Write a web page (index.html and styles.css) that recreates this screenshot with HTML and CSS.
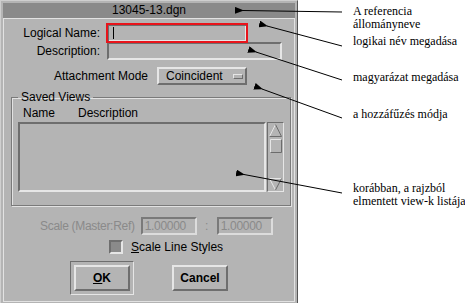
FILE: index.html
```html
<!DOCTYPE html>
<html lang="hu">
<head>
    <meta charset="UTF-8" />
    <title>Reference file attach</title>
    <link rel="stylesheet" href="styles.css">
</head>
<body>
    <div class="page">
        <div class="dialog">
            <div class="titlebar">13045-13.dgn</div>
            <div class="panel">
                <div class="row row-name">
                    <span class="lbl">Logical Name:</span>
                    <div class="field focus"><span class="caret"></span></div>
                </div>
                <div class="row row-desc">
                    <span class="lbl">Description:</span>
                    <div class="field sunken desc"></div>
                </div>
                <div class="row row-mode">
                    <span class="lbl lbl-mode">Attachment Mode</span>
                    <div class="option">Coincident<span class="ind"></span></div>
                </div>

                <fieldset class="group">
                    <legend>Saved Views</legend>
                    <div class="heads"><span class="h-name">Name</span><span>Description</span></div>
                    <div class="listwrap">
                        <div class="list"></div>
                        <div class="scroll">
                            <svg width="15" height="68" viewBox="0 0 15 68">
                                <!-- up arrow -->
                                <polyline points="1.5,13.5 7.5,1.5" fill="none" stroke="#e6e6e6" />
                                <polyline points="7.5,1.5 13.5,13.5 1.5,13.5" fill="none" stroke="#6c6c6c" />
                                <!-- slider -->
                                <polyline points="2.5,29.5 2.5,16.5 13.5,16.5" fill="none" stroke="#e6e6e6" />
                                <polyline points="13.5,16.5 13.5,29.5 2.5,29.5" fill="none" stroke="#6c6c6c" />
                                <!-- down arrow -->
                                <polyline points="7.5,67 1.5,55.5 13.5,55.5" fill="none" stroke="#e6e6e6" />
                                <polyline points="13.5,55.5 7.5,67" fill="none" stroke="#6c6c6c" />
                            </svg>
                        </div>
                    </div>
                </fieldset>

                <div class="scale">
                    <span class="dis scale-lbl">Scale (Master:Ref)</span>
                    <div class="num">1.00000</div>
                    <span class="dis colon">:</span>
                    <div class="num">1.00000</div>
                </div>

                <div class="check">
                    <span class="box"></span>
                    <span><u>S</u>cale Line Styles</span>
                </div>

                <div class="buttons">
                    <div class="default"><div class="btn"><u>O</u>K</div></div>
                    <div class="btn cancel">Cancel</div>
                </div>
            </div>
        </div>

        <div class="notes">
            <div class="note n1">A referencia<br>állományneve</div>
            <div class="note n2">logikai név megadása</div>
            <div class="note n3">magyarázat megadása</div>
            <div class="note n4">a hozzáfűzés módja</div>
            <div class="note n5">korábban, a rajzból<br>elmentett view-k listája</div>
        </div>

        <svg class="arrows" width="465" height="303" viewBox="0 0 465 303">
            <defs>
                <marker id="head" markerWidth="9" markerHeight="7" refX="1" refY="3.5" orient="auto-start-reverse" markerUnits="userSpaceOnUse">
                    <polygon points="0,3.5 9,0 9,7" fill="#000" />
                </marker>
            </defs>
            <line x1="243" y1="10.5" x2="342" y2="12" stroke="#000" marker-start="url(#head)" />
            <line x1="267" y1="26" x2="342" y2="46" stroke="#000" marker-start="url(#head)" />
            <line x1="256" y1="52" x2="342" y2="80" stroke="#000" marker-start="url(#head)" />
            <line x1="262" y1="89" x2="342" y2="118" stroke="#000" marker-start="url(#head)" />
            <line x1="244" y1="174.5" x2="342" y2="193" stroke="#000" marker-start="url(#head)" />
        </svg>
    </div>
</body>
</html>
```

FILE: styles.css
```css
html, body {
    margin: 0;
    padding: 0;
    background: #fff;
}

.page {
    position: relative;
    width: 465px;
    height: 303px;
    overflow: hidden;
    display: flex;
    font-family: 'Liberation Sans', Arial, sans-serif;
    font-size: 12px;
    color: #000;
}

/* dialog window */
.dialog {
    width: 298px;
    height: 305px;
    flex: none;
    box-sizing: border-box;
    border: 1px solid;
    border-color: #cfcfcf #555 #555 #cfcfcf;
    padding: 2px;
    background: #b4b4b4;
    display: flex;
    flex-direction: column;
}

.titlebar {
    height: 15px;
    line-height: 15px;
    text-align: center;
    background: #8a8a8a;
    color: #000;
}

.panel {
    flex: 1;
    border: 1px solid #e2e2e2;
    display: flex;
    flex-direction: column;
}

.row {
    display: flex;
    align-items: center;
}

.lbl {
    width: 96px;
    text-align: right;
    flex: none;
}

.row-name {
    margin-top: 4px;
    height: 20px;
    gap: 6px;
}

.row-desc {
    margin-top: -1px;
    height: 18px;
    gap: 7px;
}

.row-mode {
    margin-top: 7px;
    height: 18px;
    gap: 9px;
}

.lbl-mode {
    width: 144px;
}

.field {
    box-sizing: border-box;
    height: 100%;
}

.focus {
    width: 142px;
    border: 2px solid #e8141b;
    box-shadow: inset 1px 1px 0 #6e6e6e, inset -1px -1px 0 #e6e6e6;
    position: relative;
}

.caret {
    position: absolute;
    left: 5px;
    top: 2px;
    width: 1px;
    height: 12px;
    background: #000;
}

.sunken {
    border: 2px solid;
    border-color: #6e6e6e #e6e6e6 #e6e6e6 #6e6e6e;
}

.desc {
    width: 175px;
}

.option {
    box-sizing: border-box;
    width: 90px;
    height: 18px;
    border: 2px solid;
    border-color: #e6e6e6 #6e6e6e #6e6e6e #e6e6e6;
    padding-left: 7px;
    line-height: 14px;
    display: flex;
    align-items: center;
    justify-content: space-between;
    padding-right: 2px;
}

.ind {
    box-sizing: border-box;
    width: 10px;
    height: 5px;
    border: 1px solid;
    border-color: #e6e6e6 #6e6e6e #6e6e6e #e6e6e6;
}

/* saved views group */
.group {
    margin: 5px 0 0 7px;
    width: 280px;
    box-sizing: border-box;
    padding: 0 6px 13px 6px;
    border: 1px solid #7a7a7a;
    box-shadow: inset 1px 1px 0 #e2e2e2, 1px 1px 0 #e2e2e2;
    min-width: 0;
}

.group legend {
    padding: 0 3px;
    line-height: 14px;
}

.heads {
    margin-top: 2px;
    height: 14px;
    line-height: 14px;
    padding-left: 5px;
    display: flex;
}

.h-name {
    width: 55px;
}

.listwrap {
    margin-top: 2px;
    display: flex;
    gap: 1px;
    height: 70px;
}

.list {
    width: 248px;
    box-sizing: border-box;
    border: 2px solid;
    border-color: #6e6e6e #e6e6e6 #e6e6e6 #6e6e6e;
}

.scroll {
    width: 17px;
    box-sizing: border-box;
    border: 1px solid;
    border-color: #6e6e6e #e6e6e6 #e6e6e6 #6e6e6e;
    display: flex;
}

/* scale row */
.scale {
    margin-top: 11px;
    height: 18px;
    padding-left: 36px;
    display: flex;
    align-items: center;
    gap: 6px;
}

.dis {
    color: #8a8a8a;
}

.scale-lbl {
    letter-spacing: -0.3px;
}

.colon {
    width: 8px;
    text-align: center;
}

.num {
    box-sizing: border-box;
    width: 56px;
    height: 18px;
    border: 2px solid;
    border-color: #7a7a7a #dcdcdc #dcdcdc #7a7a7a;
    color: #8a8a8a;
    line-height: 14px;
    padding-left: 2px;
    letter-spacing: -0.3px;
}

.check {
    margin-top: 5px;
    height: 14px;
    padding-left: 105px;
    display: flex;
    align-items: center;
    gap: 8px;
}

.box {
    box-sizing: border-box;
    width: 14px;
    height: 14px;
    background: #8a8a8a;
    border: 2px solid;
    border-color: #6e6e6e #e6e6e6 #e6e6e6 #6e6e6e;
}

/* buttons */
.buttons {
    margin-top: 7px;
    padding-left: 66px;
    display: flex;
    align-items: flex-start;
    gap: 38px;
}

.default {
    padding: 3px;
    border: 1px solid;
    border-color: #6e6e6e #e6e6e6 #e6e6e6 #6e6e6e;
}

.btn {
    box-sizing: border-box;
    width: 56px;
    height: 26px;
    border: 2px solid;
    border-color: #e6e6e6 #6e6e6e #6e6e6e #e6e6e6;
    font-weight: bold;
    text-align: center;
    line-height: 22px;
}

.cancel {
    margin-top: 4px;
}

/* annotations */
.notes {
    margin-left: 55px;
    font-family: 'Liberation Serif', 'Times New Roman', serif;
    font-size: 12px;
    line-height: 13px;
    color: #000;
}

.note {
    white-space: nowrap;
}

.n1 { margin-top: 5px; }
.n2 { margin-top: 4px; }
.n3 { margin-top: 23px; }
.n4 { margin-top: 24px; }
.n5 { margin-top: 61px; }

.arrows {
    position: absolute;
    left: 0;
    top: 0;
    pointer-events: none;
}
```
